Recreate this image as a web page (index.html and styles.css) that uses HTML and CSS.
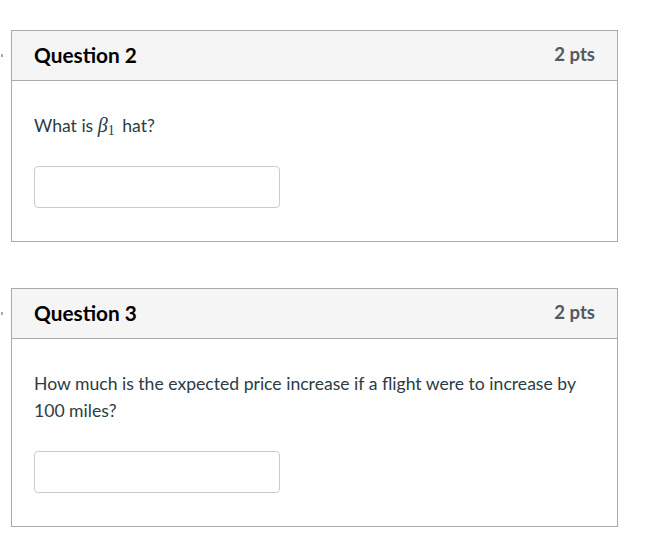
FILE: index.html
```html
<!DOCTYPE html>
<html>
<head>
<meta charset="utf-8">
<link rel="stylesheet" href="styles.css">
</head>
<body>
<div class="page">
  <div class="question">
    <div class="q-header">
      <span class="q-name">Question 2</span>
      <span class="q-points">2 pts</span>
    </div>
    <div class="q-body">
      <p class="q-text">What is <span class="math"><i class="mi">β</i><sub class="mn">1</sub></span> hat?</p>
      <input class="answer" type="text">
    </div>
  </div>
  <div class="question">
    <div class="q-header">
      <span class="q-name">Question 3</span>
      <span class="q-points">2 pts</span>
    </div>
    <div class="q-body">
      <p class="q-text">How much is the expected price increase if a flight were to increase by 100 miles?</p>
      <input class="answer" type="text">
    </div>
  </div>
</div>
</body>
</html>
```
FILE: styles.css
```css
html, body {
  margin: 0;
  padding: 0;
  background: #fff;
}
body {
  font-family: Lato, "Noto Sans", sans-serif;
  color: #2d3b45;
}
.page {
  display: flex;
  flex-direction: column;
  gap: 46px;
  padding: 30px 0 0 11px;
}
.question {
  position: relative;
  width: 607px;
  box-sizing: border-box;
  border: 1px solid #aaaaaa;
}
.question::before {
  content: "";
  position: absolute;
  left: -11px;
  top: 23px;
  width: 2px;
  height: 3px;
  background: #8fb2cc;
}
.q-header {
  display: flex;
  justify-content: space-between;
  align-items: center;
  height: 50px;
  box-sizing: border-box;
  padding: 0 22px 3px;
  background: #f5f5f5;
  border-bottom: 1px solid #aaaaaa;
}
.q-name {
  font-size: 20.8px;
  font-weight: 700;
  color: #000;
}
.q-points {
  font-size: 18.6px;
  font-weight: 700;
  color: #555a5e;
}
.q-body {
  padding: 31px 22px 33px;
}
.q-text {
  margin: 0 0 27px;
  font-size: 17.6px;
  line-height: 27px;
  width: 560px;
}
.math {
  font-family: "Liberation Serif", "DejaVu Serif", serif;
  font-size: 20px;
  line-height: 1;
}
.mi {
  font-style: italic;
}
.mn {
  font-size: 14px;
  line-height: 0;
  vertical-align: -3px;
  margin-right: 3px;
}
.answer {
  display: block;
  width: 246px;
  height: 42px;
  box-sizing: border-box;
  margin: 0;
  border: 1px solid #cccccc;
  border-radius: 4px;
  background: #fff;
  outline: none;
}
```
